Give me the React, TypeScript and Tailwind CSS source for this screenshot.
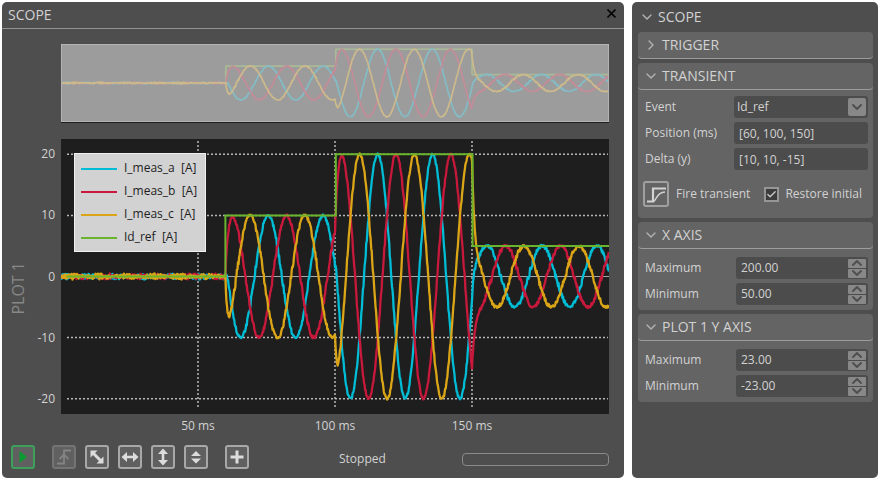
import React, { useId, useState } from "react";
import { Check, ChevronDown, ChevronRight, ChevronUp } from "lucide-react";

type Trace = {
  name: string;
  color: string;
  faded: string;
  peak: number;
  seed: number;
};

// one period is 20 ms, "peak" is the time of any positive peak
const TRACES: Trace[] = [
  { name: "I_meas_a", color: "#00bcd4", faded: "#84bcc6", peak: 75.6, seed: 1103 },
  { name: "I_meas_b", color: "#c8193c", faded: "#c48c98", peak: 82.3, seed: 47017 },
  { name: "I_meas_c", color: "#daa516", faded: "#cdba8c", peak: 89, seed: 830911 },
];

const REF_COLOR = "#6ab42d";
const REF_FADED = "#a9ba96";
const PERIOD = 20;
const T_MAX = 200;
const Y_MAX = 22.5;
const Y_TICKS = [20, 10, 0, -10, -20];
const X_TICKS = [50, 100, 150];

function amplitude(t: number) {
  if (t < 60) return 0;
  if (t < 100) return 10 * (1 - Math.exp(-(t - 60) / 0.7));
  if (t < 150) return 20 - 10 * Math.exp(-(t - 100) / 0.7);
  return 5 + 15 * Math.exp(-(t - 150) / 0.9);
}

function tracePath(trace: Trace, width: number, height: number, noise: number) {
  let seed = trace.seed;
  const points: string[] = [];
  for (let t = 0; t <= T_MAX; t += 0.2) {
    seed = (seed * 16807) % 2147483647;
    const phase = (2 * Math.PI * (t - trace.peak)) / PERIOD;
    const ripple = 0.3 + 0.7 * Math.abs(Math.sin(phase));
    const n = (seed / 2147483647 - 0.5) * noise * ripple;
    const v = amplitude(t) * Math.cos(phase) + n;
    const x = (t / T_MAX) * width;
    const y = height / 2 - (v / Y_MAX) * (height / 2);
    points.push(`${x.toFixed(1)} ${y.toFixed(1)}`);
  }
  return `M${points.join("L")}`;
}

function refPath(width: number, height: number, start: number) {
  const steps = [
    [start, 0],
    [60, 0],
    [60, 10],
    [100.3, 10],
    [100.3, 20],
    [150.2, 20],
    [150.2, 5],
    [T_MAX, 5],
  ];
  return `M${steps
    .map(([t, v]) => `${(t / T_MAX) * width} ${height / 2 - (v / Y_MAX) * (height / 2)}`)
    .join("L")}`;
}

function Overview() {
  return (
    <div className="border-b border-[#1e1e1e]">
      <svg
        viewBox="0 0 548 78"
        preserveAspectRatio="none"
        className="block h-[78px] w-full border border-[#b4b4b4] bg-[#9c9c9c]"
      >
        <g fill="none" strokeWidth="1.7" strokeLinejoin="round">
          <path d={refPath(548, 78, 0)} stroke={REF_FADED} />
          {TRACES.map((trace) => (
            <path key={trace.name} d={tracePath(trace, 548, 78, 1.2)} stroke={trace.faded} />
          ))}
        </g>
      </svg>
    </div>
  );
}

function Plot() {
  return (
    <div className="relative">
      <svg viewBox="0 0 548 275" preserveAspectRatio="none" className="block h-[275px] w-full bg-[#1e1e1e]">
        <g stroke="#b8b8b8" strokeWidth="1.5" strokeDasharray="2 2">
          {Y_TICKS.filter((v) => v !== 0).map((v) => {
            const y = 137.5 - (v / Y_MAX) * 137.5;
            return <line key={v} x1="6" x2="547" y1={y} y2={y} />;
          })}
          {X_TICKS.map((t) => (
            <line key={t} x1={t * 2.74} x2={t * 2.74} y1="2" y2="269" />
          ))}
        </g>
        <line x1="6" x2="548" y1="137.5" y2="137.5" stroke="#a8a8a8" strokeWidth="1" />
        <g fill="none" strokeWidth="2.3" strokeLinejoin="round">
          {TRACES.map((trace) => (
            <path key={trace.name} d={tracePath(trace, 548, 275, 1)} stroke={trace.color} />
          ))}
          <path d={refPath(548, 275, 2)} stroke={REF_COLOR} strokeWidth="2" strokeLinejoin="miter" />
        </g>
      </svg>
      <ul className="absolute left-[13px] top-[14px] border border-[#f0f0f0] bg-[#d2d2d2] pb-[3px] pl-[6px] pr-2 pt-[2px] text-xs text-[#1e1e1e]">
        {[...TRACES, { name: "Id_ref", color: REF_COLOR }].map((item) => (
          <li key={item.name} className="flex h-[23px] items-center gap-[7px]">
            <span className="mt-[3px] h-[2px] w-9" style={{ backgroundColor: item.color }} />
            <span className="whitespace-pre">{item.name}  [A]</span>
          </li>
        ))}
      </ul>
    </div>
  );
}

type ToolButtonProps = {
  label: string;
  className?: string;
  disabled?: boolean;
  children: React.ReactNode;
};

function ToolButton({ label, className = "border-[#a8a8a8] text-[#dcdcdc]", disabled, children }: ToolButtonProps) {
  return (
    <button
      type="button"
      aria-label={label}
      disabled={disabled}
      className={`flex size-6 items-center justify-center rounded-[3px] border-2 bg-[#606060] ${className}`}
    >
      <svg viewBox="0 0 20 20" className="size-5 shrink-0" fill="currentColor">
        {children}
      </svg>
    </button>
  );
}

function Toolbar() {
  return (
    <div className="flex items-center gap-[9px]">
      <ToolButton label="Run" className="mr-2 border-[#3ca05a] text-[#0a9b32]">
        <path d="M6.5 4L14 10L6.5 16Z" />
      </ToolButton>
      <ToolButton label="Trigger" className="border-[#747474] text-[#848484]" disabled>
        <path
          d="M3 16.5H10V3.5H17M5.5 12L10 7.5L14.5 12"
          fill="none"
          stroke="currentColor"
          strokeWidth="1.8"
        />
      </ToolButton>
      <ToolButton label="Fit all">
        <path d="M3.5 3.5H10.5L3.5 10.5ZM16.5 16.5H9.5L16.5 9.5Z" />
        <path d="M6 6L14 14" stroke="currentColor" strokeWidth="3" />
      </ToolButton>
      <ToolButton label="Fit horizontally">
        <path d="M1.5 10L7 5V15ZM18.5 10L13 5V15Z" />
        <path d="M5 10H15" stroke="currentColor" strokeWidth="2.6" />
      </ToolButton>
      <ToolButton label="Fit vertically">
        <path d="M10 1.5L5 7H15ZM10 18.5L5 13H15Z" />
        <path d="M10 5V15" stroke="currentColor" strokeWidth="2.6" />
      </ToolButton>
      <ToolButton label="Center">
        <path d="M10 4L5 9H15ZM10 16.5L5 11.5H15Z" />
      </ToolButton>
      <div className="ml-2">
        <ToolButton label="Add plot">
          <path d="M10 3.5V16.5M3.5 10H16.5" stroke="currentColor" strokeWidth="3" />
        </ToolButton>
      </div>
    </div>
  );
}

function ScopeWindow() {
  return (
    <main className="flex min-w-0 flex-1 flex-col rounded-[5px] bg-[#4e4e4e]">
      <header className="flex h-[27px] items-center justify-between border-b border-[#919191] pl-[6px] pr-[7px]">
        <h1 className="text-sm">SCOPE</h1>
        <button type="button" aria-label="Close" className="mb-1 text-black">
          <svg viewBox="0 0 11 11" className="size-[11px]" stroke="currentColor" strokeWidth="1.7">
            <path d="M1.5 1.5L9.5 9.5M9.5 1.5L1.5 9.5" />
          </svg>
        </button>
      </header>
      <div className="grid grid-cols-[16px_35px_1fr] pl-2 pr-[15px] pt-[15px]">
        <div className="col-start-3 mb-4">
          <Overview />
        </div>
        <h2 className="col-start-1 mt-6 rotate-180 self-center text-base leading-4 text-[#888888] [writing-mode:vertical-rl]">
          PLOT 1
        </h2>
        <div className="flex flex-col justify-between py-[7px] pr-[6px] text-right text-xs">
          {Y_TICKS.map((v) => (
            <span key={v}>{v}</span>
          ))}
        </div>
        <Plot />
        <div className="col-start-3 grid grid-cols-8 pt-1 text-xs">
          <span className="col-span-2 col-start-2 text-center">50 ms</span>
          <span className="col-span-2 text-center">100 ms</span>
          <span className="col-span-2 text-center">150 ms</span>
        </div>
      </div>
      <div className="flex items-center pb-[9px] pl-[9px] pr-[15px] pt-[11px]">
        <Toolbar />
        <span className="ml-[90px] mt-1 text-xs">Stopped</span>
        <div className="ml-auto mt-1 h-[13px] w-[147px] rounded-[4px] border border-[#8a8a8a]" />
      </div>
    </main>
  );
}

type SectionProps = {
  title: string;
  defaultOpen?: boolean;
  children?: React.ReactNode;
};

function Section({ title, defaultOpen = true, children }: SectionProps) {
  const [open, setOpen] = useState(defaultOpen);
  const Icon = open ? ChevronDown : ChevronRight;
  return (
    <section className="rounded-[4px] bg-[#646464]">
      <h3>
        <button
          type="button"
          aria-expanded={open}
          onClick={() => setOpen(!open)}
          className="flex h-[27px] w-full items-center gap-[3px] rounded-[4px] border-b border-[#9c9c9c] pl-[5px] text-sm"
        >
          <Icon className="size-4 text-[#b4b4b4]" />
          {title}
        </button>
      </h3>
      {open && children ? children : null}
    </section>
  );
}

function TextRow({ label, value }: { label: string; value: string }) {
  const id = useId();
  return (
    <div className="flex items-center">
      <label htmlFor={id} className="w-[91px] shrink-0 pl-[2px]">
        {label}
      </label>
      <input
        id={id}
        type="text"
        defaultValue={value}
        className="h-[22px] min-w-0 flex-1 rounded-[3px] bg-[#4c4c4c] px-[5px] outline-none"
      />
    </div>
  );
}

function NumberRow({ label, initial }: { label: string; initial: number }) {
  const id = useId();
  const [value, setValue] = useState(initial);
  return (
    <div className="flex items-center">
      <label htmlFor={id} className="w-[93px] shrink-0 pl-[2px]">
        {label}
      </label>
      <div className="flex h-[22px] min-w-0 flex-1 items-center rounded-[3px] bg-[#4c4c4c] pl-[5px] pr-[2px]">
        <input
          id={id}
          type="text"
          readOnly
          value={value.toFixed(2)}
          className="min-w-0 flex-1 bg-transparent outline-none"
        />
        <div className="flex flex-col gap-px">
          <button
            type="button"
            aria-label={`Increase ${label}`}
            onClick={() => setValue(value + 1)}
            className="flex h-[9px] w-[18px] items-center justify-center rounded-[1px] bg-[#888888] text-[#505050]"
          >
            <ChevronUp className="size-4 shrink-0" strokeWidth={3} />
          </button>
          <button
            type="button"
            aria-label={`Decrease ${label}`}
            onClick={() => setValue(value - 1)}
            className="flex h-[9px] w-[18px] items-center justify-center rounded-[1px] bg-[#888888] text-[#505050]"
          >
            <ChevronDown className="size-4 shrink-0" strokeWidth={3} />
          </button>
        </div>
      </div>
    </div>
  );
}

function AxisSection({ title, max, min }: { title: string; max: number; min: number }) {
  return (
    <Section title={title}>
      <div className="flex flex-col gap-1 px-[5px] pb-[5px] pt-2">
        <NumberRow label="Maximum" initial={max} />
        <NumberRow label="Minimum" initial={min} />
      </div>
    </Section>
  );
}

function TransientSection() {
  const [restore, setRestore] = useState(true);
  return (
    <Section title="TRANSIENT">
      <div className="flex flex-col gap-1 px-[5px] pb-[11px] pt-[6px]">
        <div className="flex items-center">
          <label htmlFor="event" className="w-[91px] shrink-0 pl-[2px]">
            Event
          </label>
          <div className="relative flex-1">
            <select
              id="event"
              className="block h-[22px] w-full appearance-none rounded-[3px] bg-[#4c4c4c] px-[3px] outline-none"
            >
              <option>Id_ref</option>
            </select>
            <span className="pointer-events-none absolute right-[2px] top-[2px] flex size-[18px] items-center justify-center rounded-[2px] bg-[#888888] text-[#505050]">
              <ChevronDown className="size-4" strokeWidth={3} />
            </span>
          </div>
        </div>
        <TextRow label="Position (ms)" value="[60, 100, 150]" />
        <TextRow label="Delta (y)" value="[10, 10, -15]" />
        <div className="flex items-center pt-[7px]">
          <button type="button" className="flex items-center gap-[7px]">
            <span className="flex size-[26px] items-center justify-center rounded-[3px] border-2 border-[#a0a0a0]">
              <svg viewBox="0 0 22 22" className="size-[22px] shrink-0" fill="none" stroke="#d2d2d2">
                <path d="M2 18.5H8V5.5H21" strokeWidth="2.2" />
                <path d="M8.5 18.5C12 17 11 9.5 20 9" strokeWidth="1.4" />
              </svg>
            </span>
            Fire transient
          </button>
          <label className="ml-auto flex items-center gap-[6px] pr-[6px]">
            <span className="relative block size-[15px]">
              <input
                type="checkbox"
                checked={restore}
                onChange={() => setRestore(!restore)}
                className="block size-[15px] appearance-none border-2 border-[#969696] bg-[#3c3c3c]"
              />
              {restore ? (
                <Check
                  className="pointer-events-none absolute inset-[2px] size-[11px] text-[#c8c8c8]"
                  strokeWidth={3}
                />
              ) : null}
            </span>
            Restore initial
          </label>
        </div>
      </div>
    </Section>
  );
}

function SettingsPanel() {
  return (
    <aside className="w-[246px] shrink-0 rounded-[5px] bg-[#4e4e4e] pl-[6px] pr-[5px] text-xs">
      <h2 className="flex h-[30px] items-center gap-[3px] pl-px text-sm">
        <ChevronDown className="size-4 text-[#b4b4b4]" />
        SCOPE
      </h2>
      <div className="flex flex-col gap-1">
        <Section title="TRIGGER" defaultOpen={false} />
        <TransientSection />
        <AxisSection title="X AXIS" max={200} min={50} />
        <AxisSection title="PLOT 1 Y AXIS" max={23} min={-23} />
      </div>
    </aside>
  );
}

export default function App() {
  return (
    <div className="flex min-h-screen gap-2 bg-white p-[2px] font-['Open_Sans','Noto_Sans',sans-serif] text-[#d2d2d2]">
      <ScopeWindow />
      <SettingsPanel />
    </div>
  );
}
